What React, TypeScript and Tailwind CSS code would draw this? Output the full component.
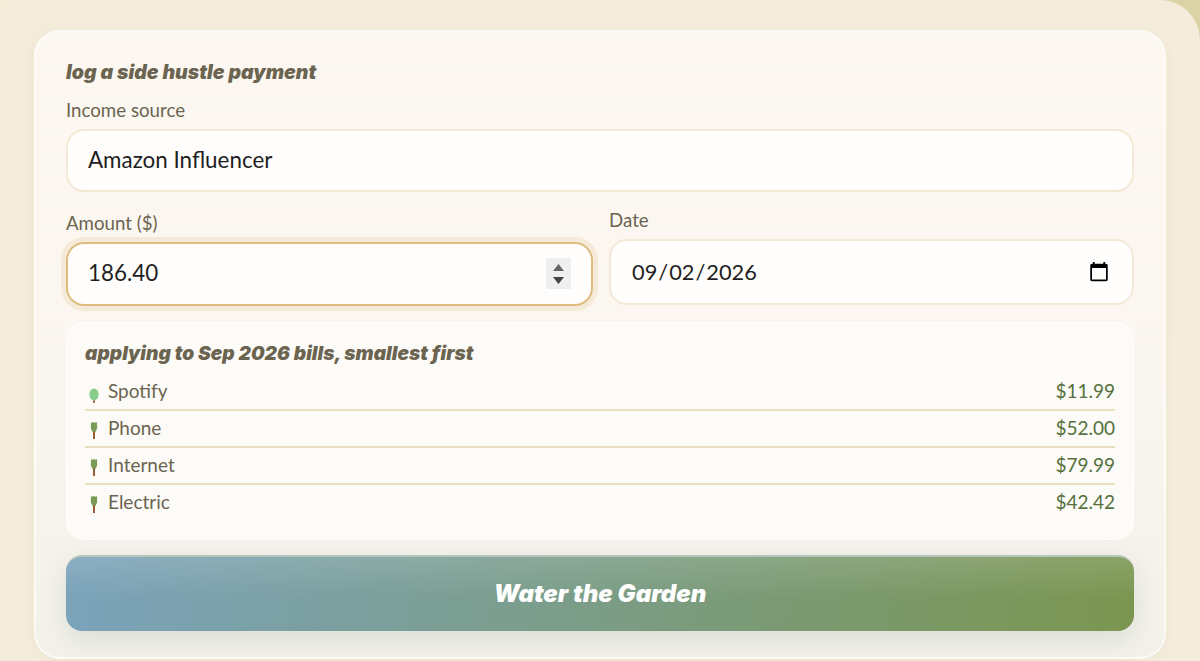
import React from "react";

function Tree({ round }: { round?: boolean }) {
  return round ? (
    <svg width="10" height="15" viewBox="0 0 10 15" className="mt-[8px] shrink-0">
      <rect x="4.1" y="10" width="1.8" height="5" fill="#a5683f" />
      <ellipse cx="5" cy="6.5" rx="4.6" ry="6" fill="#86cc8a" />
    </svg>
  ) : (
    <svg width="10" height="18" viewBox="0 0 10 18" className="mt-[3px] shrink-0">
      <path d="M2 1.5 Q3.4 0.6 3.8 2 Q5 -0.2 6.2 2 Q6.6 0.6 8 1.5 L8.2 7 Q7.6 9.5 6 11.5 L4 11.5 Q2.4 9.5 1.8 7 Z" fill="#7a9a58" />
      <rect x="4" y="10.5" width="2" height="7.5" fill="#985c36" />
    </svg>
  );
}

const bills = [
  { name: "Spotify", amount: "$11.99", round: true },
  { name: "Phone", amount: "$52.00" },
  { name: "Internet", amount: "$79.99" },
  { name: "Electric", amount: "$42.42" },
];

const body = { fontFamily: '"Lato", "Noto Sans", sans-serif' };
const display = { fontFamily: '"Inter", "Lato", sans-serif' };

export default function App() {
  return (
    <div className="h-[661px] w-[1200px] overflow-hidden bg-[#dcd2a8]" style={body}>
      <div className="h-full rounded-tr-[40px] bg-gradient-to-br from-[#f3ecd9] to-[#f5eddc] px-[34px] pt-[30px]">
        <div className="h-[629px] rounded-[26px] border-2 border-white/60 bg-gradient-to-b from-[#fcf8f1] via-[#fbf7f0] to-[#f3f1ea] px-[30px] pt-[28px] shadow-[0_2px_10px_rgba(120,100,60,0.06)]">
          <h2 className="h-[24px] text-[19.5px] font-black italic leading-[24px] text-[#6b6450]" style={display}>
            log a side hustle payment
          </h2>
          <label className="mt-[15px] block h-[22px] text-[18.7px] leading-[22px] text-[#6b6450]">Income source</label>
          <input
            readOnly
            value="Amazon Influencer"
            className="mt-[8px] block h-[63px] w-full rounded-[18px] border-2 border-[#f3e9d6] bg-[#fffefc] px-5 pb-[2px] text-[22.4px] text-[#1f1f1f] outline-none"
          />
          <div className="mt-[17px] flex items-start gap-4">
            <div className="w-[527px] pt-[3px]">
              <label className="block h-[22px] text-[18.7px] leading-[22px] text-[#6b6450]">Amount ($)</label>
              <div className="relative mt-[8px] h-[64px] rounded-[18px] shadow-[0_0_0_5px_rgba(230,200,150,0.28)]">
                <input
                  readOnly
                  value="186.40"
                  className="block h-full w-full rounded-[18px] border-2 border-[#dfbd7e] bg-[#fffefc] px-5 pb-[4px] text-[22.4px] text-[#1f1f1f] outline-none"
                />
                <div className="absolute right-[22px] top-[16px] flex h-[31px] w-[25px] flex-col items-center justify-center gap-[6px] bg-[#efefef]">
                  <svg width="11" height="7" viewBox="0 0 11 7"><path d="M5.5 0 L11 7 H0 Z" fill="#666" /></svg>
                  <svg width="11" height="7" viewBox="0 0 11 7"><path d="M0 0 H11 L5.5 7 Z" fill="#444" /></svg>
                </div>
              </div>
            </div>
            <div className="flex-1">
              <label className="block h-[22px] text-[18.7px] leading-[22px] text-[#6b6450]">Date</label>
              <input
                type="date"
                defaultValue="2026-09-02"
                className="mt-[8px] block h-[66px] w-full rounded-[18px] border-2 border-[#f3e9d6] bg-[#fffefc] px-5 text-[21.8px] text-[#1f1f1f] outline-none"
              />
            </div>
          </div>
          <div className="mt-[16px] h-[218px] rounded-[18px] border border-white/70 bg-[#fdfbf7] px-[18px] pt-[18px]">
            <h3 className="h-[24px] text-[19.2px] font-black italic leading-[24px] text-[#6b6450]" style={display}>
              applying to Sep 2026 bills, smallest first
            </h3>
            <div className="mt-[9px]">
              {bills.map((b, i) => (
                <div
                  key={b.name}
                  className={`flex h-[37px] items-center justify-between border-b-2 text-[19px] ${i < 3 ? "border-[#e9dfbe]" : "border-transparent"}`}
                >
                  <div className="flex items-center gap-[9px] pl-[4px] text-[#6b6450]">
                    <Tree round={b.round} />
                    {b.name}
                  </div>
                  <span className="text-[#55703c]">{b.amount}</span>
                </div>
              ))}
            </div>
          </div>
          <button
            className="mt-[15px] flex h-[76px] w-full items-center justify-center rounded-[16px] border-t-2 border-[#b4c6bb] bg-[linear-gradient(180deg,rgba(255,255,255,0.12),rgba(255,255,255,0)_55%),linear-gradient(95deg,#7ba3bb,#7b9650)] text-[24px] font-black italic text-white shadow-[0_8px_28px_rgba(100,130,130,0.18)]"
            style={display}
          >
            Water the Garden
          </button>
        </div>
      </div>
    </div>
  );
}
